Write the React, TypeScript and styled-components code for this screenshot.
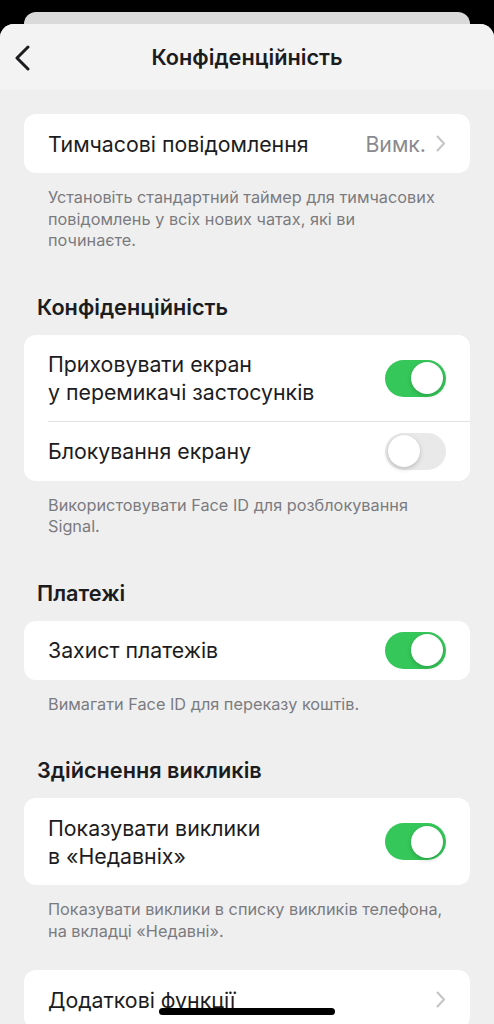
import React from "react";
import styled, { createGlobalStyle } from "styled-components";

const Global = createGlobalStyle`
  html, body { margin: 0; padding: 0; background: #000; }
  * { box-sizing: border-box; }
  body { font-family: Inter, "Noto Sans", "Liberation Sans", sans-serif; -webkit-font-smoothing: antialiased; }
`;

const Screen = styled.div`
  position: relative;
  width: 494px;
  height: 1024px;
  background: #000;
  overflow: hidden;
  display: flex;
  flex-direction: column;
  padding-top: 12px;
`;

const BackSheet = styled.div`
  height: 14px;
  margin: 0 24px;
  background: #dadada;
  border-radius: 12px 12px 0 0;
  flex: none;
`;

const Sheet = styled.div`
  flex: 1;
  margin-top: -2px;
  background: #efefef;
  border-radius: 14px 14px 0 0;
  display: flex;
  flex-direction: column;
  overflow: hidden;
`;

const NavBar = styled.div`
  height: 66px;
  flex: none;
  background: #f3f3f3;
  display: grid;
  grid-template-columns: 60px 1fr 60px;
  align-items: center;
`;

const BackButton = styled.div`
  display: flex;
  align-items: center;
  padding-left: 14px;
  padding-top: 1px;
`;

const Title = styled.div`
  text-align: center;
  font-size: 21.7px;
  font-weight: 600;
  color: #1c1c1e;
`;

const Content = styled.div`
  padding: 24px 24px 0;
  display: flex;
  flex-direction: column;
`;

const Card = styled.div<{ $gapTop?: number }>`
  background: #fff;
  border-radius: 12px;
  overflow: hidden;
  margin-top: ${(p) => p.$gapTop ?? 0}px;
`;

const Row = styled.div<{ $divider?: boolean }>`
  position: relative;
  display: flex;
  align-items: center;
  justify-content: space-between;
  padding: 0 24px;
  min-height: 59px;
  ${(p) =>
    p.$divider
      ? `&::after { content: ""; position: absolute; left: 24px; right: 0; bottom: 0; height: 1px; background: #e2e2e4; }`
      : ""}
`;

const RowLabel = styled.div`
  padding: 15.5px 0;
  font-size: 21.3px;
  line-height: 28px;
  color: #1c1c1e;
`;

const Accessory = styled.div`
  display: flex;
  align-items: center;
  gap: 10px;
`;

const Value = styled.span`
  font-size: 21.3px;
  line-height: 28px;
  color: #8a8a8e;
`;

const Footer = styled.div`
  margin-top: 14px;
  padding: 0 0 0 24px;
  font-size: 16.3px;
  line-height: 21.5px;
  color: #7b7b7f;
  white-space: nowrap;
`;

const SectionHeader = styled.div`
  margin-top: 43px;
  margin-bottom: 16px;
  padding-left: 13px;
  font-size: 21.7px;
  line-height: 24px;
  font-weight: 600;
  color: #1c1c1e;
`;

const Track = styled.div<{ $on: boolean }>`
  position: relative;
  width: 61px;
  height: 37px;
  border-radius: 19px;
  background: ${(p) => (p.$on ? "#35c759" : "#e9e9ea")};
  flex: none;
`;

const Knob = styled.div<{ $on: boolean }>`
  position: absolute;
  top: 2.5px;
  left: ${(p) => (p.$on ? "26px" : "2.5px")};
  width: 32px;
  height: 32px;
  border-radius: 50%;
  background: #fff;
  box-shadow: 0 2px 5px rgba(0, 0, 0, 0.18), 0 0 1px rgba(0, 0, 0, 0.12);
`;

const HomeIndicator = styled.div`
  position: absolute;
  left: 159px;
  bottom: 9px;
  width: 176px;
  height: 7px;
  border-radius: 4px;
  background: #000;
`;

const Toggle = ({ on }: { on: boolean }) => (
  <Track $on={on}>
    <Knob $on={on} />
  </Track>
);

const Chevron = () => (
  <svg width="10" height="17" viewBox="0 0 10 17" fill="none">
    <path d="M1.5 1.5L8 8.5L1.5 15.5" stroke="#c4c4c7" strokeWidth="2" strokeLinecap="round" strokeLinejoin="round" />
  </svg>
);

const BackChevron = () => (
  <svg width="18" height="26" viewBox="0 0 18 26" fill="none">
    <path d="M14 2L3 13L14 24" stroke="#1c1c1e" strokeWidth="3" strokeLinecap="round" strokeLinejoin="round" />
  </svg>
);

export default function App() {
  return (
    <>
      <Global />
      <Screen>
        <BackSheet />
        <Sheet>
          <NavBar>
            <BackButton>
              <BackChevron />
            </BackButton>
            <Title>Конфіденційність</Title>
            <div />
          </NavBar>
          <Content>
            <Card>
              <Row>
                <RowLabel>Тимчасові повідомлення</RowLabel>
                <Accessory>
                  <Value>Вимк.</Value>
                  <Chevron />
                </Accessory>
              </Row>
            </Card>
            <Footer>
              Установіть стандартний таймер для тимчасових
              <br />
              повідомлень у всіх нових чатах, які ви
              <br />
              починаєте.
            </Footer>

            <SectionHeader>Конфіденційність</SectionHeader>
            <Card>
              <Row $divider>
                <RowLabel>
                  Приховувати екран
                  <br />у перемикачі застосунків
                </RowLabel>
                <Toggle on />
              </Row>
              <Row>
                <RowLabel>Блокування екрану</RowLabel>
                <Toggle on={false} />
              </Row>
            </Card>
            <Footer>
              Використовувати Face ID для розблокування
              <br />
              Signal.
            </Footer>

            <SectionHeader>Платежі</SectionHeader>
            <Card>
              <Row>
                <RowLabel>Захист платежів</RowLabel>
                <Toggle on />
              </Row>
            </Card>
            <Footer>Вимагати Face ID для переказу коштів.</Footer>

            <SectionHeader>Здійснення викликів</SectionHeader>
            <Card>
              <Row>
                <RowLabel>
                  Показувати виклики
                  <br />в «Недавніх»
                </RowLabel>
                <Toggle on />
              </Row>
            </Card>
            <Footer>
              Показувати виклики в списку викликів телефона,
              <br />
              на вкладці «Недавні».
            </Footer>

            <Card $gapTop={28}>
              <Row>
                <RowLabel>Додаткові функції</RowLabel>
                <Chevron />
              </Row>
            </Card>
          </Content>
        </Sheet>
        <HomeIndicator />
      </Screen>
    </>
  );
}
